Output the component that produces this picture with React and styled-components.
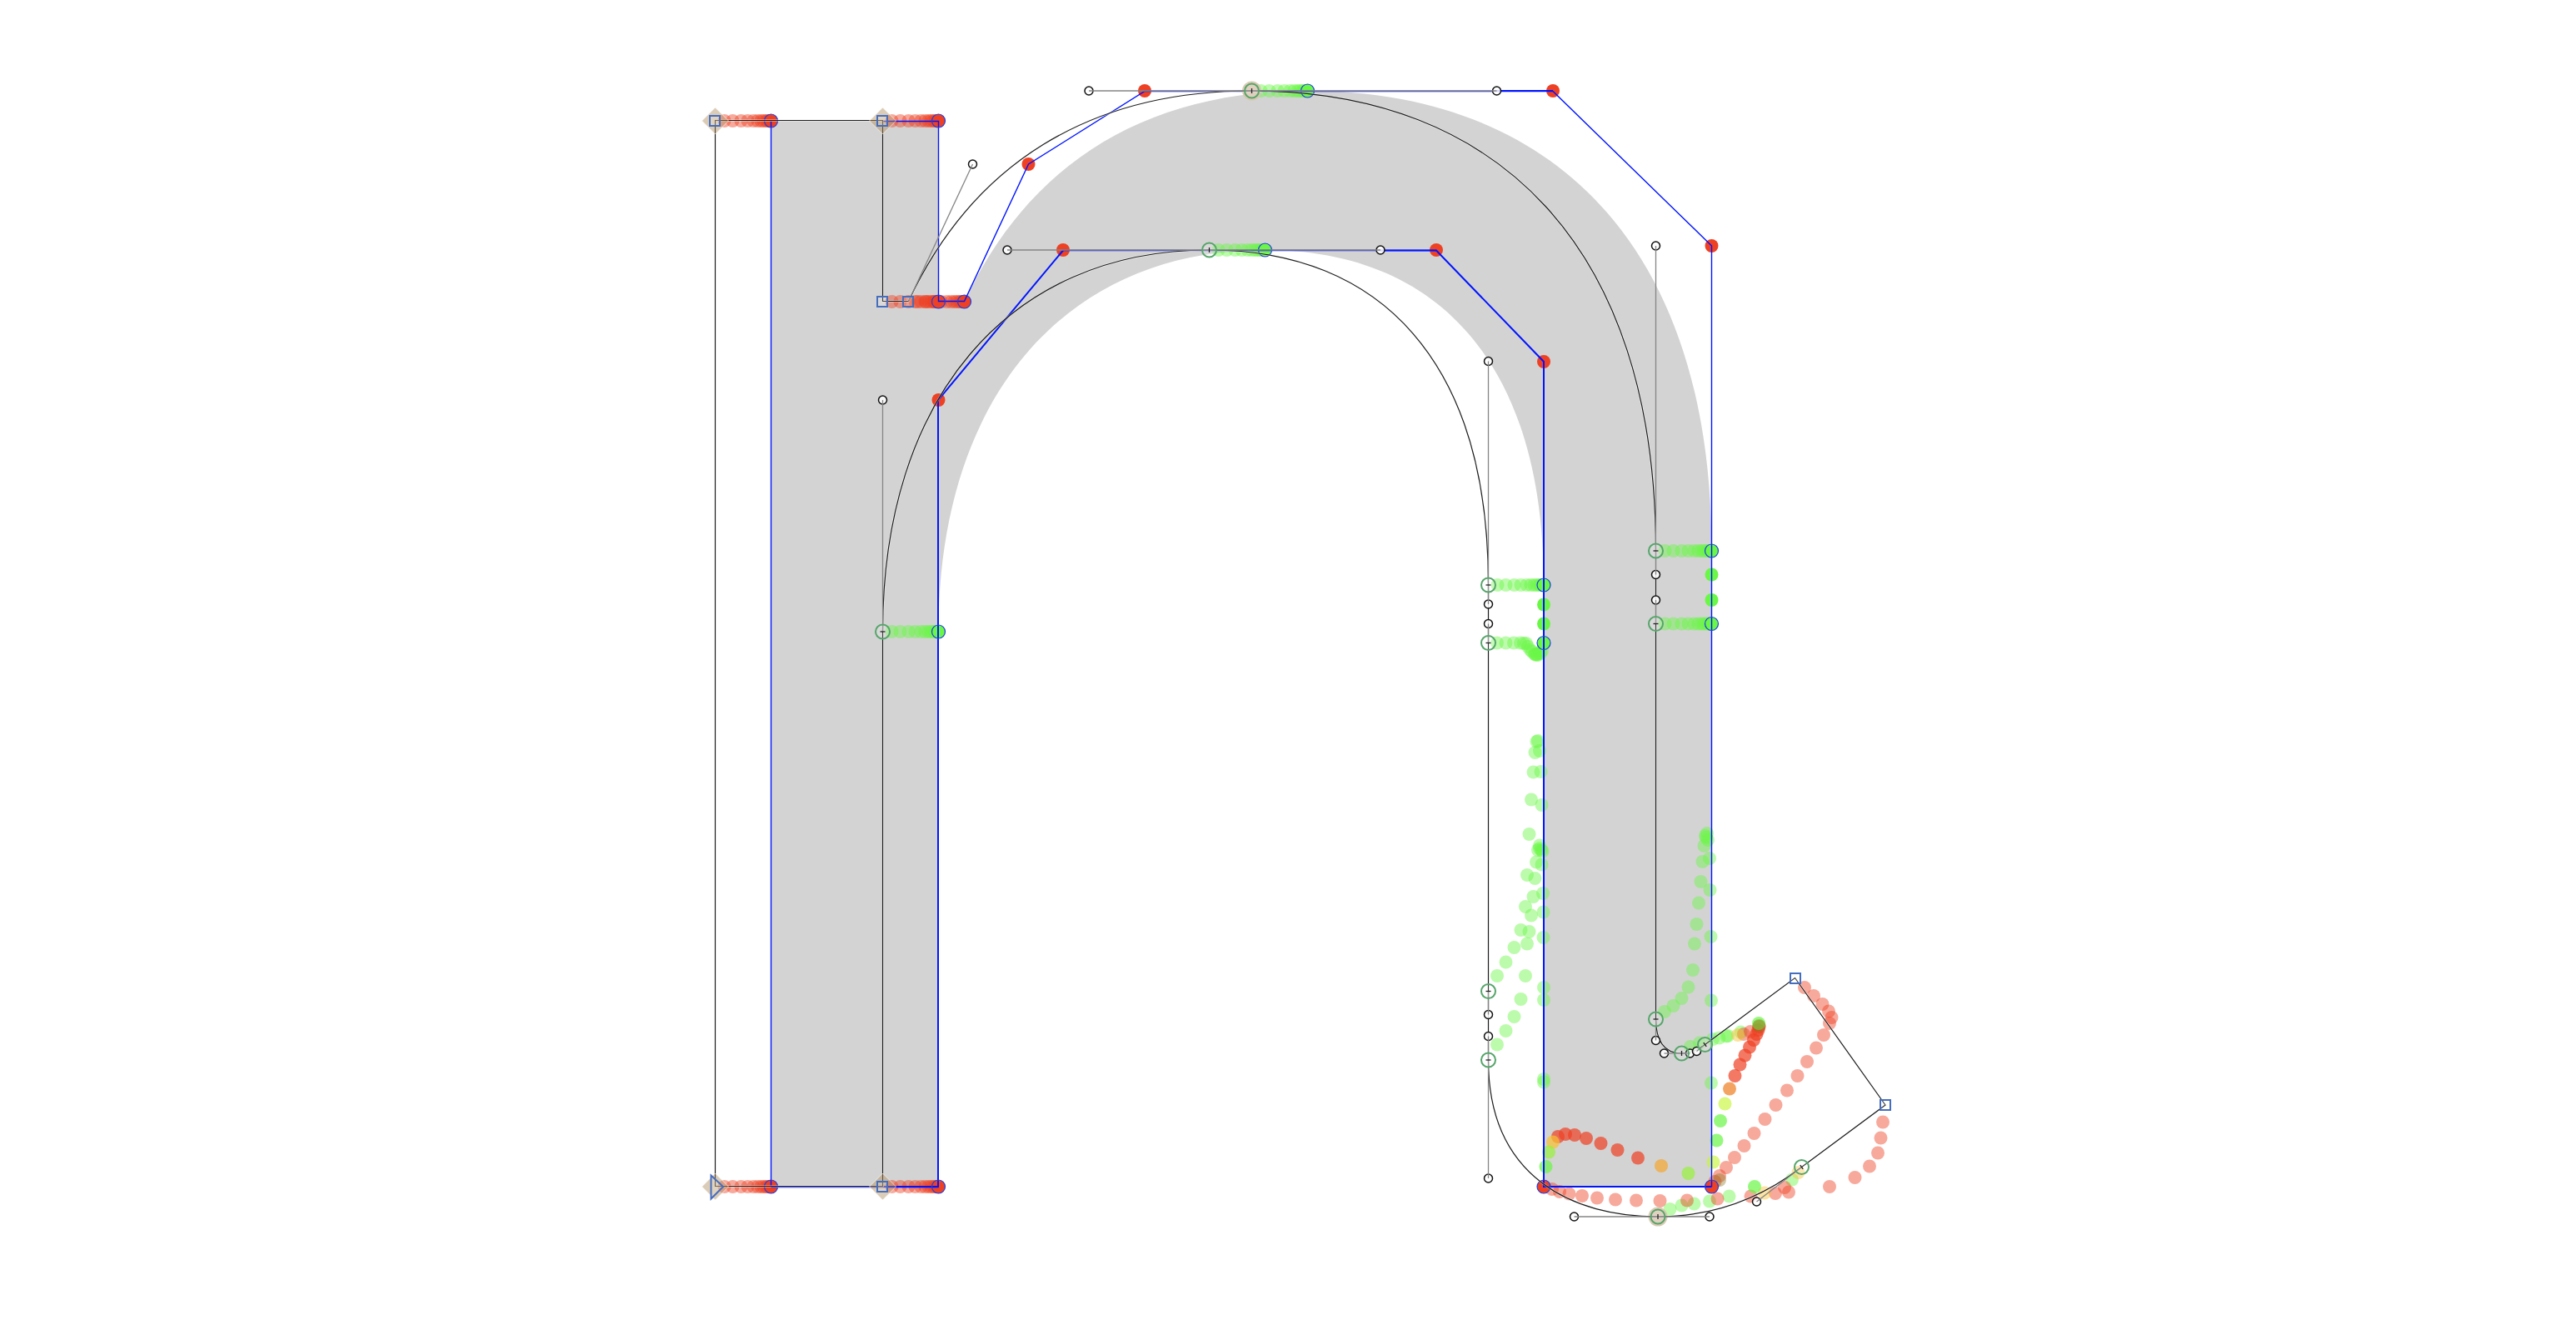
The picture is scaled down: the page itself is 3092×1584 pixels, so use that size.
import React from "react";
import styled, { createGlobalStyle } from "styled-components";

const GlobalStyle = createGlobalStyle`
  body {
    margin: 0;
    background: #ffffff;
  }
`;

const Page = styled.main`
  display: flex;
  justify-content: center;
  background: #ffffff;
`;

const Canvas = styled.svg`
  display: block;
  width: 100%;
  height: auto;
`;

const Fill = styled.path`
  fill: #d3d3d3;
`;

const Ghost = styled.circle`
  fill: ${(p) => p.$color};
  fill-opacity: ${(p) => p.$alpha};
`;

const Hull = styled.path`
  fill: none;
  stroke: #0014ff;
  stroke-width: ${(p) => (p.$bold ? 2 : 1.4)}px;
`;

const TargetRing = styled.circle`
  fill: none;
  stroke: #1f3fe0;
  stroke-width: 1.2px;
`;

const Halo = styled.path`
  fill: none;
  stroke: #ffffff;
  stroke-opacity: 0.5;
  stroke-width: 2.4px;
`;

const Outline = styled.path`
  fill: none;
  stroke: #1c1c1c;
  stroke-width: 1.2px;
`;

const HandleDot = styled.circle`
  fill: #ffffff;
  fill-opacity: 0.85;
  stroke: #111111;
  stroke-width: 1.5px;
`;

const HandleLine = styled.line`
  stroke: #858585;
  stroke-width: 1.3px;
`;

const Tan = styled.path`
  fill: #b08d5f;
  fill-opacity: 0.45;
  stroke: #ffffff;
  stroke-opacity: 0.6;
  stroke-width: 1px;
`;

const TanDisc = styled.circle`
  fill: #d9c6b0;
  fill-opacity: 0.95;
`;

const SmoothNode = styled.circle`
  fill: #ffffff;
  fill-opacity: 0.15;
  stroke: #56a56a;
  stroke-width: 2px;
`;

const Corner = styled.path`
  fill: #ffffff;
  fill-opacity: 0.15;
  stroke: #466ebe;
  stroke-width: 2px;
`;

const Tick = styled.line`
  stroke: #222222;
  stroke-width: 1.3px;
`;

const RED = "#ee4023";
const GREEN = "#6af746";
const LIME = "#c8f53a";
const AMBER = "#f8c032";
const ORANGE = "#ee7d20";

const OUTLINE = `M858.5 1423.5 V144.5 H1059.5 V361.5 H1090.5
  C1167.5 197 1307 109 1502.5 109 C1796.5 109 1987.5 295 1987.5 661
  C1987.5 689.5 1987.5 720 1987.5 748.5 V1223 C1987.5 1248.5 1997.5 1264 2018.5 1264
  C2028.5 1264 2036.5 1261.5 2046.5 1253.5 L2154.5 1173.5 L2263 1326 L2162.5 1400.5
  C2108.5 1442 2052 1460 1990 1460 C1889.5 1460 1786.5 1414 1786.5 1272
  C1786.5 1243.5 1786.5 1217.5 1786.5 1189.5 V771.5
  C1786.5 748.5 1786.5 725 1786.5 702 C1786.5 433.5 1657 300 1451.5 300
  C1209 300 1059.5 480 1059.5 758 V1423.5 Z`;

const INTERPOLATED = `M925.5 1424 V145 H1126.5 V362 H1157.5
  C1234.5 197 1374 109 1569.5 109 C1864 109 2054.5 295 2054.5 661 V1424 H1853
  V702 C1853 434 1724 300 1518.5 300 C1276 300 1126.5 480 1126.5 758 V1424 Z`;

const HULL_THIN =
  "M925.5 1424 V145.5 M1060 145.5 H1126.5 V361.5 H1157.5 L1234.5 197 L1374 109.5 H1864 L2054.5 295 V1424 M1276 300.5 H1724 M925.5 1424.5 H1126.5";
const HULL_BOLD =
  "M2054.5 1424 H1853 V434 L1724 300.5 H1657 M1796 109 H1864 M1276 300.5 L1126 480 V1424 H1061";

const STEPS = [11, 21, 31, 39, 46, 51, 55, 58, 61, 63, 65, 66];

// Nodes that slide horizontally from the outline to the interpolated shape.
const SLIDES = [
  [858.5, 145, RED], [1059.5, 145, RED], [1059.5, 362, RED], [1090.5, 362, RED],
  [858.5, 1424, RED], [1059.5, 1424, RED],
  [1502.5, 109, GREEN], [1451.5, 300, GREEN], [1059.5, 758, GREEN],
  [1786.5, 702, GREEN], [1987.5, 661, GREEN], [1987.5, 748.5, GREEN],
];

const SOLID = [
  [RED, [[1374, 109], [1234.5, 197], [1276, 300], [1724, 300], [1864, 109], [2054.5, 295], [1853, 434], [1126.5, 480], [1853, 1424], [2054.5, 1424]]],
  [GREEN, [[1853, 725.5], [1853, 748.5], [1853, 771.5], [2054.5, 689.5], [2054.5, 720]]],
];

// Sampled positions of the nodes whose paths bend, grouped by colour and strength.
const TRAILS = [
  [GREEN, 0.45, [
    [1797, 771.5], [1807.5, 771.5], [1817, 771.5], [1825, 771.5], [1829, 772], [1832, 772], [1834, 776], [1837, 780], [1839, 782], [1842, 785], [1844, 786], [1846, 786], [1849, 784], [1851, 781], [1845, 785], [1843, 785], [1848, 783],
    [1844.5, 890], [1846, 889], [1842.5, 903], [1848, 901], [1840.5, 926.5], [1849.5, 926], [1838, 959.5], [1850.5, 966],
    [1835.5, 1001], [1848, 1014.5], [1846, 1020], [1848, 1018], [1850, 1020], [1851.5, 1021.5], [1844, 1034.5], [1850.5, 1037.5],
    [1833, 1050], [1842.5, 1054], [1852, 1072], [1840.5, 1076], [1831, 1088], [1852.5, 1094.5], [1838, 1098.5],
    [1825.5, 1116], [1835.5, 1118], [1817.5, 1137], [1833, 1132.5], [1852.5, 1125], [1807.5, 1154.5], [1797, 1171], [1831, 1171], [1853, 1185], [1853, 1200],
    [1825.5, 1199], [1817.5, 1220], [1807.5, 1237], [1797, 1253.5], [1853, 1295], [1853, 1298.5],
    [2049, 1000], [2047, 1003], [2050, 1008], [2048, 1005], [2045.5, 1015], [2052, 1030], [2043.5, 1034], [2041.5, 1058], [2052.5, 1068], [2039, 1083.5], [2036.5, 1109], [2053.5, 1124], [2034, 1132.5], [2032, 1164], [2026.5, 1184.5], [2018.5, 1198], [2008.5, 1207], [1998, 1214], [2054, 1200.5], [2054, 1299.5],
    [2029, 1256], [2040, 1251.5], [2056, 1247], [2063.5, 1245.5], [2072, 1243.5], [2074, 1243], [2089.5, 1238.5],
    [2004.5, 1451], [2018.5, 1446.5], [2033.5, 1444.5], [2052, 1441.5], [2075.5, 1435.5], [2151, 1415.5],
  ]],
  [RED, 0.45, [
    [1863, 1427], [1872, 1430], [1883.5, 1432.5], [1899, 1435], [1917, 1437.5], [1939, 1439.5], [1964, 1440.5], [1992.5, 1441], [2025, 1440.5], [2061.5, 1438.5], [2101.5, 1435.5], [2131, 1432], [2147, 1430.5], [2142, 1425], [2196, 1424], [2226.5, 1413], [2244, 1399.5], [2254, 1383.5], [2257.5, 1365.5], [2260, 1346.5],
    [2166, 1185], [2177, 1195], [2187.5, 1205], [2195, 1213.5], [2198.5, 1221], [2196, 1228], [2189, 1242], [2180, 1257.5], [2169, 1274], [2157.5, 1291], [2145, 1308.5], [2131.5, 1326], [2118.5, 1343], [2105.5, 1360], [2093.5, 1375], [2082, 1389], [2072, 1401], [2064, 1411], [2058.5, 1418],
    [2093, 1241], [2101, 1238],
  ]],
  [RED, 0.7, [
    [1870, 1364], [1879, 1361], [1890, 1362], [1904, 1366], [1921.5, 1372], [1941.5, 1380], [1966, 1389.5],
    [2082.5, 1291], [2088.5, 1277.5], [2094.5, 1266.5], [2100, 1256.5], [2105, 1248], [2108.5, 1241], [2110.5, 1236], [2111.5, 1232],
  ]],
  [AMBER, 0.45, [[2086, 1242], [2118, 1431.5], [2158.5, 1407]]],
  [AMBER, 0.7, [[1864, 1370.5]]],
  [ORANGE, 0.7, [[2076, 1306.5]]],
  ["#f2a93a", 0.75, [[1994, 1399]]],
  [LIME, 0.65, [[2070.5, 1324.5], [2056.5, 1394.5]]],
  ["#97f13c", 0.7, [[1859, 1382.5], [2026.5, 1408]]],
  [GREEN, 0.7, [[1855.5, 1400], [2065, 1345], [2060.5, 1368.5], [2106, 1424], [2111, 1228]]],
  ["#8a7a20", 0.4, [[2064, 1416], [2111.5, 1231]]],
];

const RINGS = [
  [925.5, 145], [1126.5, 145], [1126.5, 362], [1157.5, 362], [925.5, 1424], [1126.5, 1424],
  [1569.5, 109], [1518.5, 300], [1126.5, 758], [1853, 702], [1853, 771.5], [2054.5, 661], [2054.5, 748.5], [1853, 1424], [2054.5, 1424],
];

// Handle end, then the node it belongs to.
const HANDLES = [
  [1167.5, 197, 1090.5, 361.5], [1307, 109, 1502.5, 109], [1796.5, 109, 1502.5, 109],
  [1987.5, 295, 1987.5, 661], [1987.5, 689.5, 1987.5, 661], [1987.5, 720, 1987.5, 748.5],
  [1987.5, 1248.5, 1987.5, 1223], [1997.5, 1264, 2018.5, 1264], [2028.5, 1264, 2018.5, 1264],
  [2036.5, 1261.5, 2046.5, 1253.5], [2108.5, 1442, 2162.5, 1400.5], [2052, 1460, 1990, 1460],
  [1889.5, 1460, 1990, 1460], [1786.5, 1414, 1786.5, 1272], [1786.5, 1243.5, 1786.5, 1272],
  [1786.5, 1217.5, 1786.5, 1189.5], [1786.5, 748.5, 1786.5, 771.5], [1786.5, 725, 1786.5, 702],
  [1786.5, 433.5, 1786.5, 702], [1657, 300, 1451.5, 300], [1209, 300, 1451.5, 300], [1059.5, 480, 1059.5, 758],
];

// Smooth nodes with the angle of their tick mark.
const SMOOTH = [
  [1502.5, 109, 90], [1451.5, 300, 90], [1059.5, 758, 0], [1786.5, 702, 0], [1786.5, 771.5, 0],
  [1987.5, 661, 0], [1987.5, 748.5, 0], [1786.5, 1189.5, 0], [1786.5, 1272, 0], [1987.5, 1223, 0],
  [2018.5, 1264, 90], [2046.5, 1253.5, 55], [2162.5, 1400.5, 55], [1990, 1460, 90],
];

const CORNERS = [[858, 145], [1059, 145], [1059, 362], [1090, 362], [1059, 1424], [2155, 1174], [2263, 1326]];
const DIAMONDS = [[858.5, 145], [1059.5, 145], [858.5, 1424], [1059.5, 1424]];
const DISCS = [[1502.5, 109], [1990, 1460]];

export default function App() {
  return (
    <Page>
      <GlobalStyle />
      <Canvas viewBox="0 0 3092 1584" role="img" aria-label="Glyph outline with interpolation trails">
        <Fill d={INTERPOLATED} />
        {SLIDES.map(([x, y, color]) =>
          STEPS.map((dx) => <Ghost key={`${x}-${y}-${dx}`} cx={x + dx} cy={y} r={8} $color={color} $alpha={0.45} />)
        )}
        {TRAILS.map(([color, alpha, points]) =>
          points.map(([x, y]) => <Ghost key={`${color}-${alpha}-${x}-${y}`} cx={x} cy={y} r={8} $color={color} $alpha={alpha} />)
        )}
        {SLIDES.map(([x, y, color]) => <Ghost key={`${x}-${y}`} cx={x + 67} cy={y} r={8} $color={color} $alpha={1} />)}
        {SOLID.map(([color, points]) =>
          points.map(([x, y]) => <Ghost key={`${x}-${y}`} cx={x} cy={y} r={8} $color={color} $alpha={1} />)
        )}
        <Hull d={HULL_THIN} />
        <Hull d={HULL_BOLD} $bold />
        {RINGS.map(([x, y]) => <TargetRing key={`${x}-${y}`} cx={x} cy={y} r={8} />)}
        {DISCS.map(([x, y]) => <TanDisc key={x} cx={x} cy={y} r={11.5} />)}
        <Halo d={OUTLINE} />
        <Outline d={OUTLINE} />
        {HANDLES.map(([x, y]) => <HandleDot key={`${x}-${y}`} cx={x} cy={y} r={5} />)}
        {HANDLES.map(([x, y, nx, ny]) => <HandleLine key={`${x}-${y}`} x1={x} y1={y} x2={nx} y2={ny} />)}
        {DIAMONDS.map(([x, y]) => <Tan key={`${x}-${y}`} d={`M${x - 16} ${y} L${x} ${y - 16} L${x + 16} ${y} L${x} ${y + 16} Z`} />)}
        {SMOOTH.map(([x, y, angle]) => (
          <g key={`${x}-${y}`}>
            <SmoothNode cx={x} cy={y} r={8.5} />
            <Tick x1={x - 3} y1={y} x2={x + 3} y2={y} transform={`rotate(${angle} ${x} ${y})`} />
          </g>
        ))}
        {CORNERS.map(([x, y]) => <Corner key={`${x}-${y}`} d={`M${x - 6} ${y - 6} h12 v12 h-12 Z`} />)}
        <Corner d="M853.5 1410.5 L868 1424 L853.5 1438.5 Z" />
      </Canvas>
    </Page>
  );
}
